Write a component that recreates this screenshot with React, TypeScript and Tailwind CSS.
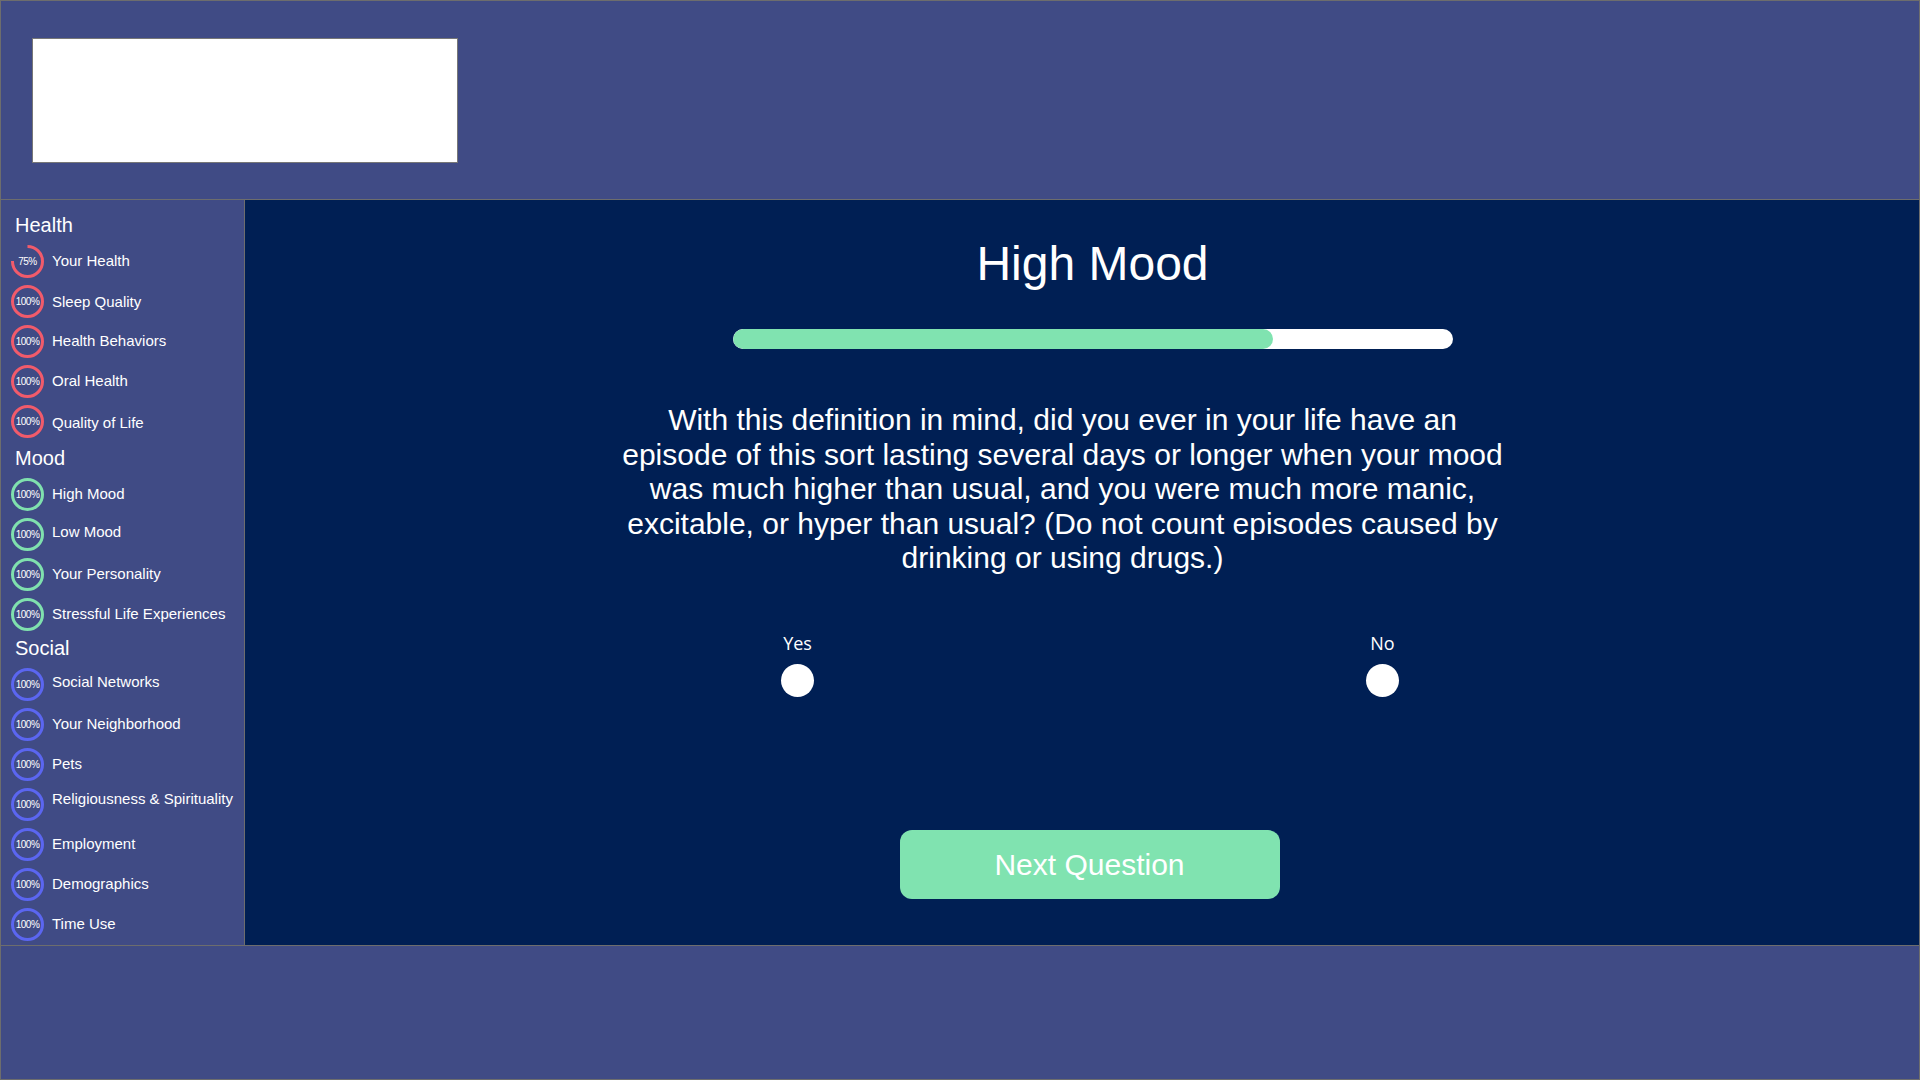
import React from 'react';

type Item = { label: string; pct: number; dy?: number };
type Section = { title: string; color: string; headH: string; items: Item[] };

const sections: Section[] = [
  {
    title: 'Health',
    color: '#f15b6b',
    headH: 'h-[41px]',
    items: [
      { label: 'Your Health', pct: 75 },
      { label: 'Sleep Quality', pct: 100, dy: 1 },
      { label: 'Health Behaviors', pct: 100 },
      { label: 'Oral Health', pct: 100 },
      { label: 'Quality of Life', pct: 100, dy: 2 },
    ],
  },
  {
    title: 'Mood',
    color: '#7fe0ae',
    headH: 'h-[33px]',
    items: [
      { label: 'High Mood', pct: 100 },
      { label: 'Low Mood', pct: 100, dy: -2 },
      { label: 'Your Personality', pct: 100 },
      { label: 'Stressful Life Experiences', pct: 100 },
    ],
  },
  {
    title: 'Social',
    color: '#5b66f0',
    headH: 'h-[30px]',
    items: [
      { label: 'Social Networks', pct: 100, dy: -2 },
      { label: 'Your Neighborhood', pct: 100 },
      { label: 'Pets', pct: 100 },
      { label: 'Religiousness & Spirituality', pct: 100, dy: -5 },
      { label: 'Employment', pct: 100 },
      { label: 'Demographics', pct: 100 },
      { label: 'Time Use', pct: 100 },
    ],
  },
];

const Ring = ({ pct, color }: { pct: number; color: string }) => {
  const r = 15;
  const c = 2 * Math.PI * r;
  return (
    <div className="relative h-[33px] w-[33px] shrink-0">
      <svg width="33" height="33" viewBox="0 0 33 33">
        <circle
          cx="16.5"
          cy="16.5"
          r={r}
          fill="none"
          stroke={color}
          strokeWidth="3"
          strokeDasharray={`${(c * pct) / 100} ${c}`}
          transform="rotate(-90 16.5 16.5)"
        />
      </svg>
      <div className="absolute inset-0 flex items-center justify-center text-[10px] tracking-[-0.5px] text-white">
        {pct}%
      </div>
    </div>
  );
};

const Sidebar = () => (
  <div className="flex w-[244px] shrink-0 flex-col border-r border-[#6d6d6d]">
    {sections.map((s) => (
      <div key={s.title}>
        <div className={`flex items-end pb-[4px] pl-[14px] text-[20px] leading-[24px] text-white ${s.headH}`}>
          {s.title}
        </div>
        {s.items.map((it) => (
          <div key={it.label} className="flex h-[40px] items-center gap-[8px] pl-[10px]">
            <Ring pct={it.pct} color={s.color} />
            <span
              className="relative whitespace-nowrap text-[15px] text-white"
              style={{ top: it.dy ?? 0 }}
            >
              {it.label}
            </span>
          </div>
        ))}
      </div>
    ))}
  </div>
);

const Choice = ({ label }: { label: string }) => (
  <div className="flex w-[60px] flex-col items-center">
    <span className="text-[18px] leading-[24px] text-white" style={{ fontFamily: '"Open Sans", sans-serif' }}>
      {label}
    </span>
    <button className="mt-[9px] h-[33px] w-[33px] rounded-full bg-white" />
  </div>
);

export default function App() {
  return (
    <div
      className="flex h-[1080px] w-[1920px] flex-col border border-[#6d6d6d] bg-[#404b85]"
      style={{ fontFamily: '"Liberation Sans", Arial, sans-serif' }}
    >
      <div className="h-[199px] shrink-0 border-b border-[#6d6d6d] pl-[31px] pt-[37px]">
        <div className="h-[125px] w-[426px] border border-[#777777] bg-white" />
      </div>

      <div className="flex h-[746px] shrink-0 border-b border-[#6d6d6d]">
        <Sidebar />
        <div className="flex flex-1 flex-col items-center bg-[#001f54] pl-[21px] pt-[36px]">
          <h1 className="text-[48px] leading-[56px] text-white">High Mood</h1>
          <div className="mt-[37px] h-[20px] w-[720px] overflow-hidden rounded-full bg-white">
            <div className="h-full rounded-full bg-[#80e3b0]" style={{ width: '75%' }} />
          </div>
          <p className="mr-[60px] mt-[54px] w-[890px] text-center text-[30px] leading-[34.5px] text-white">
            With this definition in mind, did you ever in your life have an episode of this sort lasting several days
            or longer when your mood was much higher than usual, and you were much more manic, excitable, or hyper
            than usual? (Do not count episodes caused by drinking or using drugs.)
          </p>
          <div className="mr-[5px] mt-[55px] flex gap-[525px]">
            <Choice label="Yes" />
            <Choice label="No" />
          </div>
          <button className="mr-[6px] mt-[133px] h-[69px] w-[380px] rounded-[12px] bg-[#80e3b0] text-[30px] text-white">
            Next Question
          </button>
        </div>
      </div>

      <div className="flex-1" />
    </div>
  );
}
